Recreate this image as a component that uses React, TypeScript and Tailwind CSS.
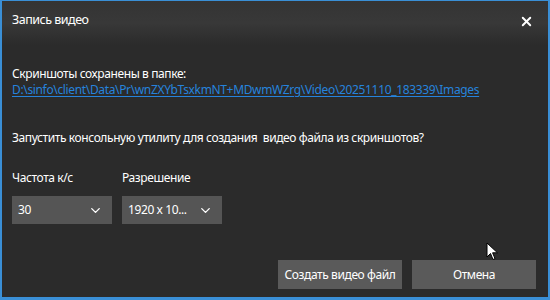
import { ChevronDown, X } from 'lucide-react';

function Select({ value }: { value: string }) {
  return (
    <div className="w-[100px] h-[28px] bg-[#555555] flex items-center justify-between pl-[6px] pr-[9px] text-white whitespace-nowrap">
      <span>{value}</span>
      <ChevronDown size={15} strokeWidth={2.2} className="text-white" />
    </div>
  );
}

export default function App() {
  return (
    <div
      className="w-[550px] h-[300px] relative flex flex-col bg-[#2b2b2b] border-[#3a8fd6] border-l-2 border-t border-r-2 border-b-[3px] text-white overflow-hidden tracking-[-0.4px]"
      style={{ fontFamily: '"Noto Sans", "Open Sans", sans-serif' }}
    >
      {/* Title bar */}
      <div className="h-[44px] shrink-0 flex items-start justify-between pl-[10px] pr-[12px] pt-[10px] bg-gradient-to-b from-[#343434] via-[#383838] to-[#2b2b2b]">
        <span className="text-[12.5px] leading-[18px] tracking-[-0.5px]">Запись видео</span>
        <X size={15} strokeWidth={3} className="mt-[3px] mr-[2px]" />
      </div>

      {/* Body */}
      <div className="flex-1 flex flex-col pl-[10px] pr-[12px] text-[12px] leading-[16px] whitespace-nowrap">
        <div className="mt-[21px]">Скриншоты сохранены в папке:</div>
        <div className="text-[#2683dc] underline underline-offset-[2px] tracking-[-0.35px]">
          D:\sinfo\client\Data\Pr\wnZXYbTsxkmNT+MDwmWZrg\Video\20251110_183339\Images
        </div>
        <div className="mt-[32px]">Запустить консольную утилиту для создания&nbsp; видео файла из скриншотов?</div>

        <div className="mt-[24px] flex gap-[10px]">
          <div className="flex flex-col gap-[10px]">
            <span>Частота к/с</span>
            <Select value="30" />
          </div>
          <div className="flex flex-col gap-[10px]">
            <span>Разрешение</span>
            <Select value="1920 x 10..." />
          </div>
        </div>

        <div className="mt-auto mb-[8px] flex justify-end gap-[10px]">
          <button className="w-[124px] h-[29px] bg-[#5a5a5a]">Создать видео файл</button>
          <button className="w-[124px] h-[29px] bg-[#5a5a5a]">Отмена</button>
        </div>
      </div>

      {/* Mouse pointer */}
      <svg className="absolute left-[484px] top-[241px]" width="14" height="20" viewBox="0 0 14 20">
        <path d="M1 1 L1 15 L4.5 11.5 L7 17.5 L9 16.6 L6.6 10.8 L11.5 10.8 Z" fill="#fff" stroke="#000" strokeWidth="1" strokeLinejoin="round" />
      </svg>
    </div>
  );
}
